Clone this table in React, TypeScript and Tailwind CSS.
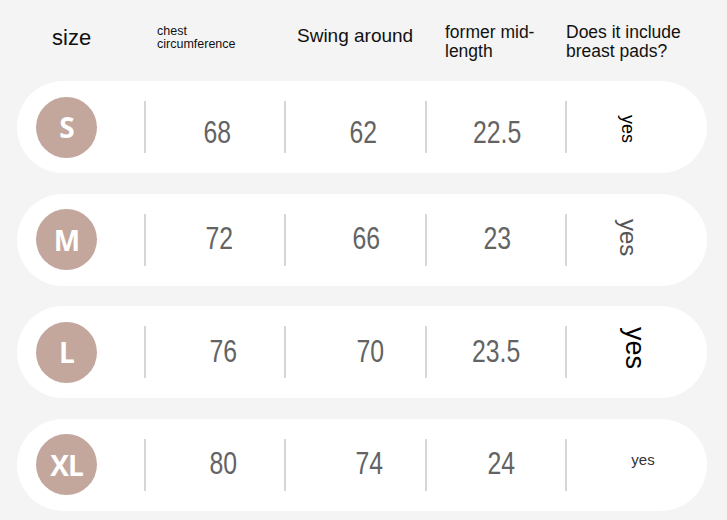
type Cell = { value: string; pad: string };

type SizeRow = {
  size: string;
  cells: Cell[];
  yes: { cls: string; pad: string };
};

const rows: SizeRow[] = [
  {
    size: 'S',
    cells: [
      { value: '68', pad: 'pl-[4px]' },
      { value: '62', pad: 'pl-[15px]' },
      { value: '22.5', pad: 'pl-[2px]' },
    ],
    yes: { cls: 'text-[18px] text-black [writing-mode:vertical-rl]', pad: 'pr-[18px] pt-[4px]' },
  },
  {
    size: 'M',
    cells: [
      { value: '72', pad: 'pl-[8px]' },
      { value: '66', pad: 'pl-[21px]' },
      { value: '23', pad: 'pl-[2px]' },
    ],
    yes: { cls: 'text-[24px] text-[#555] [writing-mode:vertical-rl]', pad: 'pr-[18px] pb-[4px]' },
  },
  {
    size: 'L',
    cells: [
      { value: '76', pad: 'pl-[16px]' },
      { value: '70', pad: 'pl-[29px]' },
      { value: '23.5', pad: 'pl-[0px]' },
    ],
    yes: { cls: 'text-[27px] text-black [writing-mode:vertical-rl]', pad: 'pr-[6px] pb-[8px]' },
  },
  {
    size: 'XL',
    cells: [
      { value: '80', pad: 'pl-[16px]' },
      { value: '74', pad: 'pl-[27px]' },
      { value: '24', pad: 'pl-[10px]' },
    ],
    yes: { cls: 'text-[15px] text-[#333]', pad: 'pl-[12px] pb-[10px]' },
  },
];

function Divider() {
  return <div className="h-[52px] w-[2px] shrink-0 bg-[#d6d6d6]" />;
}

export default function App() {
  return (
    <div className="h-[520px] w-[727px] overflow-hidden bg-[#f4f4f4] font-['Liberation_Sans',Arial,sans-serif]">
      <div className="flex h-[81px] items-start text-[#111]">
        <div className="w-[157px] shrink-0 pl-[52px] pt-[25px] text-[22px] leading-[26px]">size</div>
        <div className="w-[140px] shrink-0 pt-[25px] text-[12.5px] leading-[13px]">
          chest
          <br />
          circumference
        </div>
        <div className="w-[148px] shrink-0 pt-[25px] text-[19px] leading-[22px]">Swing around</div>
        <div className="w-[121px] shrink-0 pt-[23px] text-[17.5px] leading-[19px]">
          former mid-
          <br />
          length
        </div>
        <div className="pt-[23px] text-[17.5px] leading-[19px]">
          Does it include
          <br />
          breast pads?
        </div>
      </div>

      <div className="flex flex-col gap-[20.5px] pl-[17px] pr-[20px]">
        {rows.map((row) => (
          <div key={row.size} className="flex h-[92px] items-center rounded-full bg-white">
            <div className="flex w-[127px] shrink-0 items-center pl-[19px]">
              <div className="flex h-[61px] w-[61px] items-center justify-center rounded-full bg-[#c3a79d] font-['Open_Sans',sans-serif] text-[28px] font-bold tracking-[-1px] text-white">
                {row.size}
              </div>
            </div>
            {row.cells.map((cell, i) => (
              <div key={i} className="flex h-full items-center">
                <Divider />
                <div
                  className={`flex h-full items-center justify-center ${i === 1 ? 'w-[139px]' : 'w-[138px]'} ${cell.pad} ${row.size === 'S' ? 'pt-[10px]' : 'pb-[2px]'}`}
                >
                  <span className="inline-block origin-center scale-x-80 text-[31px] leading-none text-[#636363]">
                    {cell.value}
                  </span>
                </div>
              </div>
            ))}
            <Divider />
            <div className={`flex h-full flex-1 items-center justify-center ${row.yes.pad}`}>
              <span className={`leading-none ${row.yes.cls}`}>yes</span>
            </div>
          </div>
        ))}
      </div>
    </div>
  );
}
